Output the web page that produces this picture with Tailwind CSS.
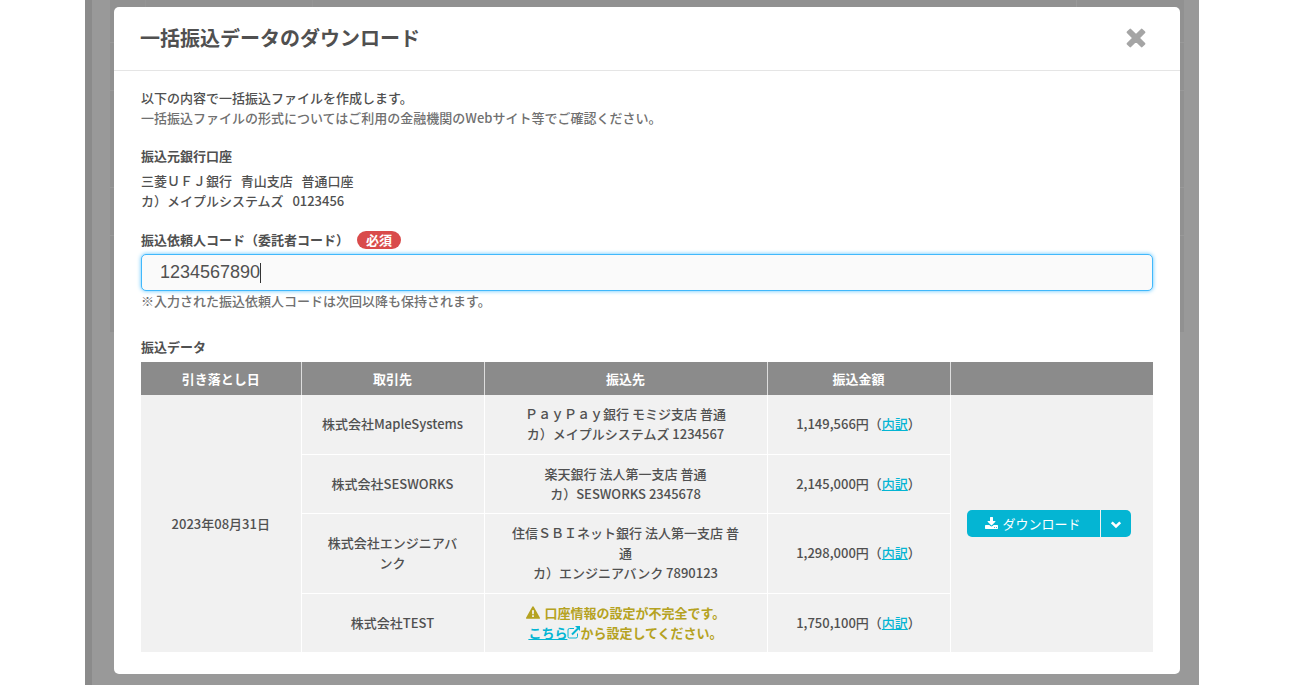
<!DOCTYPE html>
<html lang="ja">
<head>
    <meta charset="UTF-8">
    <meta name="viewport" content="width=device-width, initial-scale=1.0">
    <title>一括振込データのダウンロード</title>
    <script src="https://cdn.jsdelivr.net/npm/@tailwindcss/browser@4"></script>
</head>
<body class="bg-white pl-[85px] pr-[109px] font-['Noto_Sans_CJK_JP',sans-serif] text-[13px] leading-5 font-medium text-[#505050]">
    <div class="relative min-h-screen bg-[#999] border-l-[7px] border-[#8b8b8b] pl-[22px] pr-[19px] pt-[7px] pb-[11px]">
        <!-- dimmed page behind the dialog -->
        <div class="absolute top-0 left-[18px] right-[15px] h-[332px] bg-[#919191] flex flex-col" aria-hidden="true">
            <div class="h-[43px] border-b border-[#999] flex">
                <div class="w-9 border-r border-[#959595]"></div>
                <div class="w-[167px] border-r border-[#959595]"></div>
                <div class="grow"></div>
                <div class="w-[108px] border-l border-[#999]"></div>
            </div>
            <div class="h-12 border-b border-[#999]"></div>
            <div class="h-[97px] border-b border-[#999]"></div>
            <div class="h-12 border-b border-[#999]"></div>
        </div>

        <div role="dialog" aria-labelledby="title" class="relative bg-white rounded-[5px]">
            <header class="flex items-center justify-between h-16 pb-0.5 pl-[26px] pr-[33px] border-b border-[#e5e5e5]">
                <h1 id="title" class="text-xl font-bold">一括振込データのダウンロード</h1>
                <button type="button" aria-label="閉じる">
                    <svg class="w-[22px] h-[22px]" viewBox="0 0 22 22" fill="none" stroke="#a5a5a5" stroke-width="6"><path stroke-linejoin="round" stroke-width="2" fill="#a5a5a5" d="M5.300 2.600L11 8.300l5.700-5.700 2.700 2.700L13.700 11l5.700 5.700-2.700 2.700L11 13.700l-5.700 5.700-2.700-2.700L8.300 11 2.600 5.300z"/></svg>
                </button>
            </header>

            <div class="px-[27px] pt-[17px] pb-[22px]">
                <p>以下の内容で一括振込ファイルを作成します。</p>
                <p class="text-[#707070]">一括振込ファイルの形式についてはご利用の金融機関のWebサイト等でご確認ください。</p>

                <h2 class="mt-[18px] font-bold">振込元銀行口座</h2>
                <p class="mt-[5px]">三菱ＵＦＪ銀行&nbsp;&nbsp; 青山支店&nbsp;&nbsp; 普通口座</p>
                <p>カ）メイプルシステムズ&nbsp;&nbsp; 0123456</p>

                <div class="mt-[19px] flex items-center gap-2">
                    <label for="code" class="font-bold">振込依頼人コード（委託者コード）</label>
                    <span class="h-[18px] px-[9px] leading-[18px] rounded-full bg-[#d94b4b] text-white font-bold">必須</span>
                </div>
                <div class="relative mt-1">
                    <input type="text" id="code" value="1234567890" class="block w-full h-[37px] px-[18px] border border-[#41b8fb] rounded-[5px] bg-[#fafafa] shadow-[0_0_4px_#5cc4ff] font-['Liberation_Sans',sans-serif] text-lg font-normal text-[#505050]">
                    <span class="absolute left-[119px] top-[9px] w-px h-5 bg-[#333]"></span>
                </div>
                <p class="text-[#707070]">※入力された振込依頼人コードは次回以降も保持されます。</p>

                <h2 class="mt-[26px] mb-[5px] font-bold">振込データ</h2>
                <table class="w-full table-fixed text-center">
                    <thead class="bg-[#8b8b8b] text-white">
                        <tr class="h-[33px]">
                            <th class="w-[160px] font-bold border-r border-[#ddd]">引き落とし日</th>
                            <th class="w-[183px] font-bold border-r border-[#ddd]">取引先</th>
                            <th class="w-[283px] font-bold border-r border-[#ddd]">振込先</th>
                            <th class="w-[183px] font-bold border-r border-[#ddd]">振込金額</th>
                            <th></th>
                        </tr>
                    </thead>
                    <tbody class="bg-[#f1f1f1]">
                        <tr class="h-[59px]">
                            <td rowspan="4" class="border-r border-white">2023年08月31日</td>
                            <td class="px-4 border-r border-b border-white">株式会社MapleSystems</td>
                            <td class="px-6 border-r border-b border-white">ＰａｙＰａｙ銀行 モミジ支店 普通<br>カ）メイプルシステムズ 1234567</td>
                            <td class="border-r border-b border-white">1,149,566円（<a href="#" class="text-[#04b5d3] underline">内訳</a>）</td>
                            <td rowspan="4" class="px-4">
                                <div class="flex h-[27px] text-white">
                                    <button type="button" class="flex items-center justify-center gap-1 w-[133px] rounded-l-[5px] bg-[#04b5d3] font-normal">
                                        <svg class="w-[13px] h-[13px]" viewBox="0 -128 1664 1664" fill="currentColor"><path d="M1280 1216a64 64 0 1 0-128 0 64 64 0 0 0 128 0zm256 0a64 64 0 1 0-128 0 64 64 0 0 0 128 0zm128-224v320q0 40-28 68t-68 28H96q-40 0-68-28t-28-68V992q0-40 28-68t68-28h465l135 136q58 56 136 56t136-56l136-136h464q40 0 68 28t28 68zm-325-569q17 41-14 70l-448 448q-18 19-45 19t-45-19L339 493q-31-29-14-70 17-39 59-39h256V-64q0-26 19-45t45-19h256q26 0 45 19t19 45v448h256q42 0 59 39z"/></svg>
                                        ダウンロード
                                    </button>
                                    <button type="button" aria-label="その他の形式" class="flex items-center justify-center ml-px w-[30px] rounded-r-[5px] bg-[#04b5d3]">
                                        <svg class="w-3 h-3" viewBox="0 0 12 12" fill="none" stroke="currentColor" stroke-width="2.6"><path d="M1.800 4.300L6 8.500l4.200-4.200"/></svg>
                                    </button>
                                </div>
                            </td>
                        </tr>
                        <tr class="h-[59px]">
                            <td class="px-4 border-r border-b border-white">株式会社SESWORKS</td>
                            <td class="px-6 border-r border-b border-white">楽天銀行 法人第一支店 普通<br>カ）SESWORKS 2345678</td>
                            <td class="border-r border-b border-white">2,145,000円（<a href="#" class="text-[#04b5d3] underline">内訳</a>）</td>
                        </tr>
                        <tr class="h-20">
                            <td class="px-5 border-r border-b border-white">株式会社エンジニアバンク</td>
                            <td class="px-6 border-r border-b border-white">住信ＳＢＩネット銀行 法人第一支店 普通<br>カ）エンジニアバンク 7890123</td>
                            <td class="border-r border-b border-white">1,298,000円（<a href="#" class="text-[#04b5d3] underline">内訳</a>）</td>
                        </tr>
                        <tr class="h-[59px]">
                            <td class="px-4 border-r border-white">株式会社TEST</td>
                            <td class="px-6 border-r border-white text-[#b5a221] font-bold">
                                <svg class="inline w-[14px] h-[13px] mr-0.5 align-[-1px]" viewBox="0 0 14 13" fill="currentColor" fill-rule="evenodd"><path d="M7 0.300q.6 0 .9.600l5.900 10.700q.6 1.200-.8 1.200H1q-1.400 0-.8-1.200L6.100.9q.3-.6.9-.6zM6 4.200l.2 4.100h1.600L8 4.200zM6.100 9.300v1.700h1.800V9.300z"/></svg>
                                口座情報の設定が不完全です。<br>
                                <a href="#" class="text-[#04b5d3]"><span class="underline">こちら</span><svg class="inline w-[13px] h-[13px] align-[-1px]" viewBox="0 0 13 13" fill="none" stroke="currentColor"><path d="M7 2.500H2.500q-1.500 0-1.500 1.500v6.500Q1 12 2.500 12H9q1.500 0 1.500-1.500V7.500"/><path d="M5 8.500l6-6" stroke-width="2"/><path d="M8 0h5v5z" fill="currentColor" stroke="none"/></svg></a>から設定してください。
                            </td>
                            <td class="border-r border-white">1,750,100円（<a href="#" class="text-[#04b5d3] underline">内訳</a>）</td>
                        </tr>
                    </tbody>
                </table>
            </div>
        </div>
    </div>
</body>
</html>
